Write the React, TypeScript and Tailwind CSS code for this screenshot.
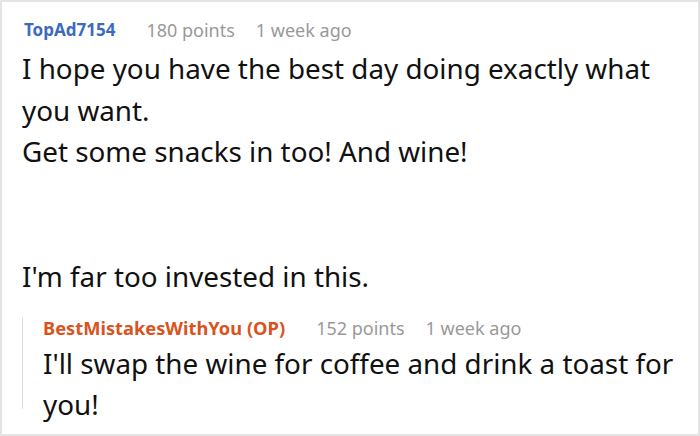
import React from "react";

const font = { fontFamily: '"Noto Sans", "Open Sans", sans-serif' };

function Meta({ name, color, points, ago, nameSize }: { name: string; color: string; points: string; ago: string; nameSize: string }) {
  return (
    <div className="flex items-center text-[18px] leading-[22px]">
      <span className={`font-bold ${nameSize} ${color}`}>{name}</span>
      <span className="ml-[31px] text-[#999]">{points}</span>
      <span className="ml-[21px] text-[#999]">{ago}</span>
    </div>
  );
}

export default function App() {
  return (
    <div style={font} className="w-[700px] h-[436px] overflow-hidden border-2 border-[#e4e4e4] bg-white text-[#111] pl-[20px] pr-[18px] pt-[17px]">
      <div className="pl-[2px]">
        <Meta name="TopAd7154" color="text-[#3c6bbd]" points="180 points" ago="1 week ago" nameSize="text-[17px]" />
      </div>
      <div className="mt-[7px] text-[27.8px] leading-[41.5px]">
        <p>I hope you have the best day doing exactly what you want.</p>
        <p>Get some snacks in too! And wine!</p>
        <p>&nbsp;</p>
        <p>&nbsp;</p>
        <p>I'm far too invested in this.</p>
      </div>
      <div className="mt-[28px] h-[92px] border-l border-[#dedede] pl-[20px]">
        <div className="-mt-[8px]">
          <Meta name="BestMistakesWithYou (OP)" color="text-[#d9531e]" points="152 points" ago="1 week ago" nameSize="text-[18.3px]" />
        </div>
        <p className="mt-[4px] text-[27.8px] leading-[41px]">
          I'll swap the wine for coffee and drink a toast for you!
        </p>
      </div>
    </div>
  );
}
